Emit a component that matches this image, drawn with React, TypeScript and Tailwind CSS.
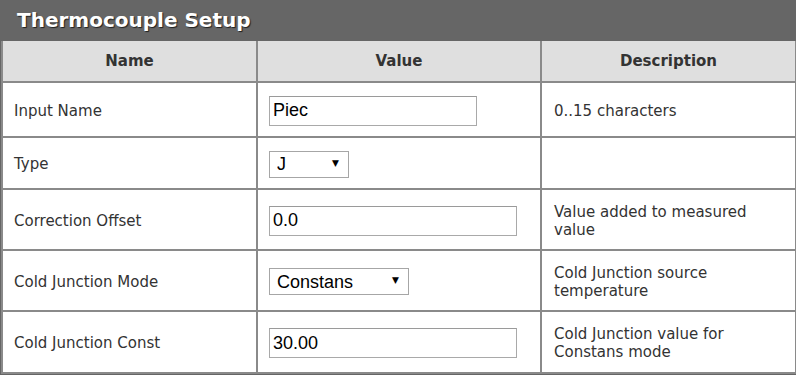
import React from 'react';

const rows = [
  { name: 'Input Name', kind: 'text', value: 'Piec', w: 'w-[208px]', h: 'h-[55px]', desc: ['0..15 characters'] },
  { name: 'Type', kind: 'select', value: 'J', w: 'w-[80px]', h: 'h-[52px]', desc: [] },
  { name: 'Correction Offset', kind: 'text', value: '0.0', w: 'w-[248px]', h: 'h-[61px]', desc: ['Value added to measured', 'value'] },
  { name: 'Cold Junction Mode', kind: 'select', value: 'Constans', w: 'w-[140px]', h: 'h-[61px]', desc: ['Cold Junction source', 'temperature'] },
  { name: 'Cold Junction Const', kind: 'text', value: '30.00', w: 'w-[248px]', h: 'h-[62px]', desc: ['Cold Junction value for', 'Constans mode'] },
];

function Field({ kind, value, w }: { kind: string; value: string; w: string }) {
  if (kind === 'select') {
    return (
      <div className={`relative inline-block ${w} h-[27px]`}>
        <select
          defaultValue={value}
          className="appearance-none w-full h-full bg-white border border-[#a6a6a6] pl-[7px] text-[18px] text-black outline-none"
          style={{ fontFamily: '"Liberation Sans", Arial, sans-serif' }}
        >
          <option>{value}</option>
        </select>
        <span className="pointer-events-none absolute right-[10px] top-[8px] text-[9px] leading-none text-black">▼</span>
      </div>
    );
  }
  return (
    <input
      type="text"
      defaultValue={value}
      className={`${w} h-[30px] bg-white border border-[#a9a9a9] border-t-[#9a9a9a] pl-[3px] text-[18px] text-black outline-none`}
      style={{ fontFamily: '"Liberation Sans", Arial, sans-serif' }}
    />
  );
}

export default function App() {
  return (
    <div
      className="w-[796px] h-[375px] bg-[#666666] overflow-hidden"
      style={{ fontFamily: '"DejaVu Sans", Verdana, sans-serif' }}
    >
      <div className="h-[41px] pl-[17px] pb-[1px] flex items-center text-white font-bold text-[20px] [text-shadow:1px_1px_1px_rgba(0,0,0,0.7)]">
        Thermocouple Setup
      </div>
      <table className="ml-[1px] w-[794px] table-fixed border-collapse">
        <colgroup>
          <col className="w-[255px]" />
          <col className="w-[284px]" />
          <col className="w-[255px]" />
        </colgroup>
        <thead>
          <tr className="h-[41px] bg-[#dfdfdf] text-[#333] text-[15px] font-bold">
            <th className="border-2 border-t-0 border-[#8a8a8a] text-center">Name</th>
            <th className="border-2 border-t-0 border-[#8a8a8a] text-center">Value</th>
            <th className="border-2 border-t-0 border-[#8a8a8a] text-center">Description</th>
          </tr>
        </thead>
        <tbody>
          {rows.map((r) => (
            <tr key={r.name} className={`${r.h} bg-white text-[15px] text-[#333]`}>
              <td className="border-2 border-[#8a8a8a] pl-[11px] pt-[3px] align-middle">{r.name}</td>
              <td className="border-2 border-[#8a8a8a] pl-[11px] pt-[2px] align-middle leading-none">
                <Field kind={r.kind} value={r.value} w={r.w} />
              </td>
              <td className="border-2 border-[#8a8a8a] pl-[12px] pt-[2px] align-middle leading-[18px]">
                {r.desc.map((d) => (
                  <div key={d}>{d}</div>
                ))}
              </td>
            </tr>
          ))}
        </tbody>
      </table>
    </div>
  );
}
